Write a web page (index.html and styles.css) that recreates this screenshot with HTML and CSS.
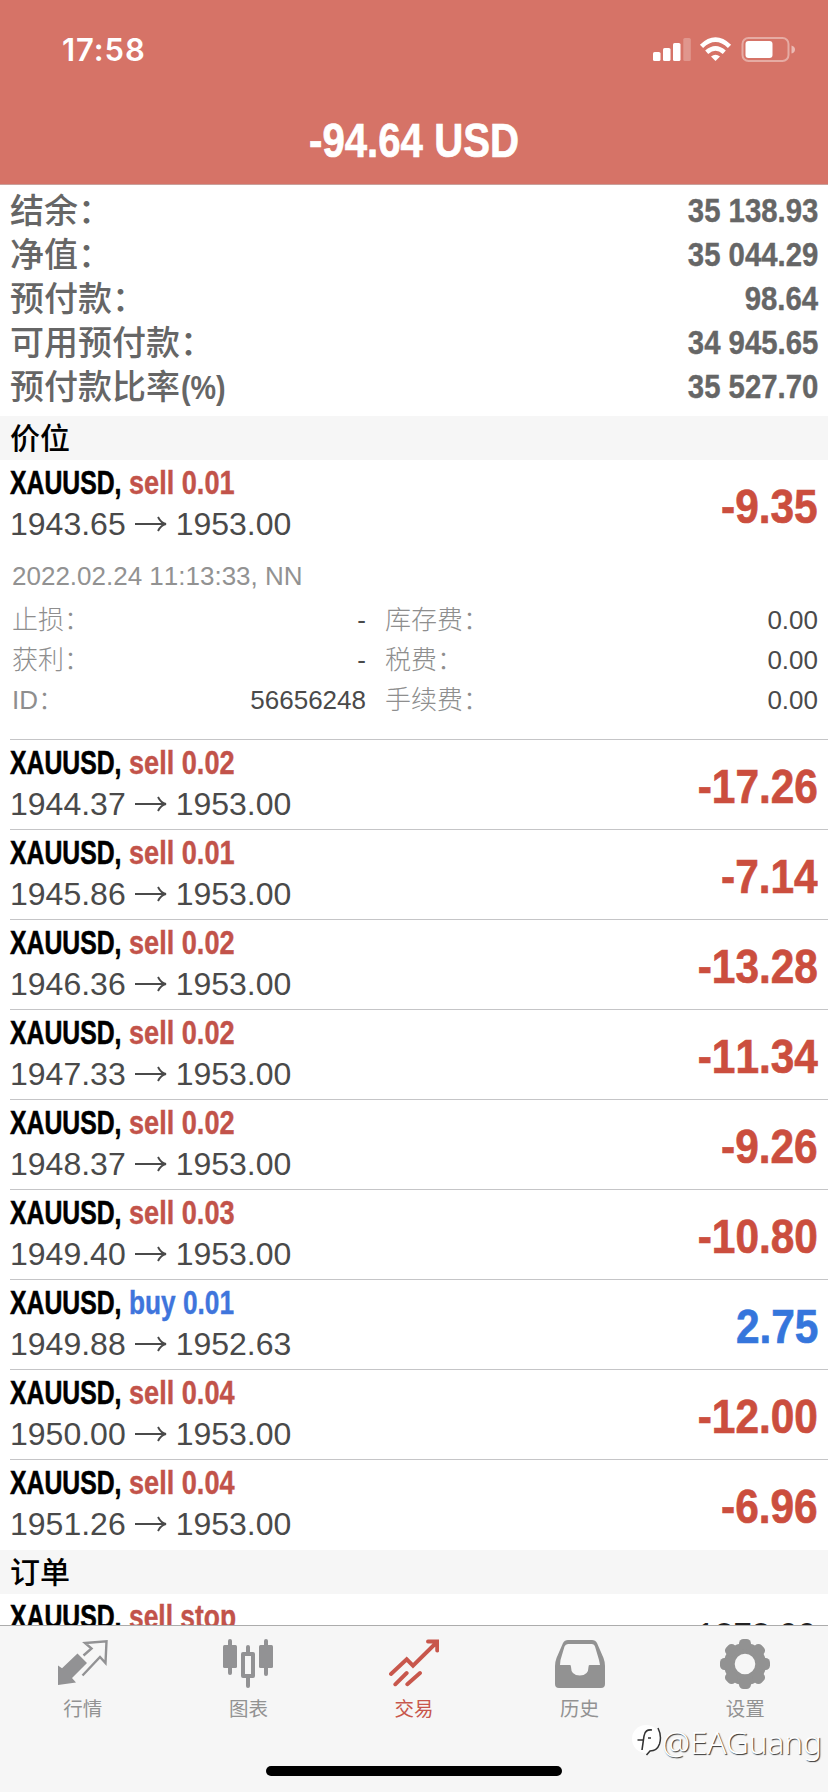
FILE: index.html
```html
<!DOCTYPE html>
<html lang="zh-CN">
<head>
<meta charset="utf-8">
<title>交易</title>
<link rel="stylesheet" href="styles.css">
</head>
<body>
<div class="screen">
  <header class="header">
    <div class="status">
      <span class="clock">17:58</span>
      <svg class="status-icons" width="142" height="26" viewBox="0 0 142 26">
        <g fill="#fff">
          <rect x="0" y="15" width="7.5" height="9" rx="1.6"/>
          <rect x="10" y="11" width="7.5" height="13" rx="1.6"/>
          <rect x="20" y="6" width="7.5" height="18" rx="1.6"/>
          <rect x="30.300" y="1" width="7.5" height="23" rx="1.6" opacity=".25"/>
          <path d="M62.500 24 L58 19.500 Q62.500 15.800 67 19.500 Z"/>
          <rect x="92.500" y="4" width="27" height="17" rx="3"/>
          <path d="M138.500 8.500 Q142 9.500 142 12.500 T138.500 16.500 Z" opacity=".5"/>
        </g>
        <g fill="none" stroke="#fff" stroke-width="4.600">
          <path d="M48.500 9.300 Q62.500 -4 76.500 9.300"/>
          <path d="M53.700 15.300 Q62.500 7.500 71.300 15.300"/>
          <rect x="89.500" y="1" width="46" height="23" rx="6" stroke-width="2" opacity=".4"/>
        </g>
      </svg>
    </div>
    <h1 class="total"><span>-94.64 USD</span></h1>
  </header>

  <section class="summary">
    <div class="sum-row"><span>结余：</span><b class="num">35 138.93</b></div>
    <div class="sum-row"><span>净值：</span><b class="num">35 044.29</b></div>
    <div class="sum-row"><span>预付款：</span><b class="num">98.64</b></div>
    <div class="sum-row"><span>可用预付款：</span><b class="num">34 945.65</b></div>
    <div class="sum-row"><span>预付款比率<b class="pct">(%)</b></span><b class="num">35 527.70</b></div>
  </section>

  <h2 class="section">价位</h2>
  <article class="deal open">
    <div class="deal-head">
      <div><div class="name"><b class="symbol">XAUUSD,</b><b class="side sell">sell 0.01</b></div>
      <div class="prices"><span>1943.65</span><svg class="arrow" viewBox="0 0 32 20"><path d="M0 10H30.500M23 3Q26 9 31 10Q26 11 23 17"/></svg><span>1953.00</span></div></div>
      <b class="profit loss">-9.35</b>
    </div>
    <div class="stamp">2022.02.24 11:13:33, NN</div>
    <dl class="details">
      <dt>止损：</dt><dd>-</dd><dt>库存费：</dt><dd>0.00</dd>
      <dt>获利：</dt><dd>-</dd><dt>税费：</dt><dd>0.00</dd>
      <dt>ID：</dt><dd>56656248</dd><dt>手续费：</dt><dd>0.00</dd>
    </dl>
  </article>
  <div id="deals"></div>
  <h2 class="section">订单</h2>
  <article class="order">
    <div class="name"><b class="symbol">XAUUSD,</b><b class="side sell stop">sell stop</b></div>
    <span class="order-price">1878.00</span>
  </article>

  <nav class="tabs">
    <div class="tab">
      <svg width="50" height="50" viewBox="0 0 50 50"><path fill="#929294" d="M0 26.500 4 29.300 19.500 14.500 29 24 14 39 18 43.500 0 46Z"/><path fill="none" stroke="#929294" stroke-width="2.400" d="M25.500 16.500 33.500 9.500 27 4 48.500 2.200 47.500 24 42 18 24.500 36.500"/></svg>
      <span>行情</span>
    </div>
    <div class="tab">
      <svg width="50" height="50" viewBox="0 0 50 50"><g fill="#929294"><rect x="5" width="4" height="36" rx="2"/><rect y="6" width="14" height="23" rx="1.500"/><rect x="41" width="4" height="37" rx="2"/><rect x="36" y="6" width="14" height="23" rx="1.500"/><rect x="23" y="6" width="4" height="10" rx="2"/><rect x="23" y="36" width="4" height="13" rx="2"/></g><rect x="20" y="15" width="10" height="22" fill="none" stroke="#929294" stroke-width="4" stroke-linejoin="round"/></svg>
      <span>图表</span>
    </div>
    <div class="tab active">
      <svg width="50" height="50" viewBox="0 0 50 50"><path fill="none" stroke="#c8574c" stroke-width="3.900" stroke-linecap="round" d="M2 35 17.700 20.300 24 26.700 48 3M39 2.500H48.200V11.500M6.300 45.300 17.700 34M18.300 45.300 31 34"/></svg>
      <span>交易</span>
    </div>
    <div class="tab">
      <svg width="50" height="50" viewBox="0 0 50 50"><path fill="#929292" fill-rule="evenodd" d="M8 4Q9.500 1 13 1H37Q40.500 1 42 4L48.500 19Q50 23 50 27V45Q50 49 46 49H4Q0 49 0 45V27Q0 23 1.500 19ZM13 5Q10.500 5 9.500 7.500L5.500 21 5 26H15Q16 26 16 28 16 36.500 24.800 36.500 33.500 36.500 33.500 28 33.500 26 34.500 26H45L44 21 40 7.500Q39.500 5 37 5Z"/></svg>
      <span>历史</span>
    </div>
    <div class="tab">
      <svg width="50" height="50" viewBox="-25 -25 50 50"><g fill="none" stroke="#929292"><circle r="15.700" stroke-width="10.800"/></g><g fill="#929292"><rect id="tooth" x="-6" y="-25" width="12" height="11" rx="4.500"/><use href="#tooth" transform="rotate(45)"/><use href="#tooth" transform="rotate(90)"/><use href="#tooth" transform="rotate(135)"/><use href="#tooth" transform="rotate(180)"/><use href="#tooth" transform="rotate(225)"/><use href="#tooth" transform="rotate(270)"/><use href="#tooth" transform="rotate(315)"/></g></svg>
      <span>设置</span>
    </div>
  </nav>
  <div class="home-bar"></div>
  <div class="watermark">
    <svg width="30" height="36" viewBox="0 0 30 36"><circle cx="14" cy="15" r="14" fill="#fff"/><path d="M26 4Q30 12 27.500 20 25 27 18 27L14.500 31" fill="none" stroke="#333" stroke-width="1.500"/><path d="M20 6Q13 5 12 12L10 26M5.500 16H11M16 14H19" fill="none" stroke="#333" stroke-width="1.600"/></svg>
    <span>@EAGuang</span>
  </div>
</div>
<script src="deals.js"></script>
</body>
</html>
```
FILE: styles.css
```css
* { box-sizing: border-box; }
body { margin: 0; background: #fff; font-family: "Liberation Sans", "Noto Sans CJK SC", sans-serif; font-kerning: none; }
.screen { position: relative; width: 828px; height: 1792px; overflow: hidden; background: #fff; }

.header { height: 185px; background: #d67367; border-bottom: 1px solid #c9a09b; color: #fff; }
.status { display: flex; justify-content: space-between; height: 98px; padding: 36px 33px 0 62px; }
.clock { font: 600 31px/28px Inter, sans-serif; letter-spacing: .9px; }
.status-icons { margin-top: 1px; }
.total { margin: 0; font-size: 49px; line-height: 85px; text-align: center; }
.total span { display: inline-block; transform: scaleX(.82); -webkit-text-stroke: .7px; }

.summary { height: 231px; padding: 4px 10px 0; color: #666; font-size: 34px; font-weight: 500; }
.sum-row { display: flex; justify-content: space-between; height: 44px; line-height: 44px; }
.num { transform: scaleX(.862); transform-origin: right; line-height: 42px; -webkit-text-stroke: .4px; }
.pct { display: inline-block; margin-left: 1px; transform: scaleX(.87); transform-origin: left; font-size: 33px; line-height: 40px; }

.section { margin: 0; height: 44px; padding-left: 10px; background: #f6f6f6; color: #000; font-size: 30px; font-weight: 500; line-height: 46px; }

.deal { height: 90px; margin-left: 10px; padding-right: 10px; border-bottom: 1px solid #c5c5c7; }
.deal.open { height: 280px; }
.deal.last { border-bottom: 0; }
.deal-head { display: flex; justify-content: space-between; height: 82px; }
.name { display: flex; height: 46px; line-height: 46px; font-size: 33px; white-space: nowrap; }
.symbol { width: 118.500px; color: #000; transform: scaleX(.75); transform-origin: left; -webkit-text-stroke: .6px; }
.side { transform: scaleX(.822); transform-origin: left; -webkit-text-stroke: .4px; }
.sell { color: #c2534a; }
.stop { transform: scaleX(.8); }
.buy { color: #3f75dc; transform: scaleX(.795); }
.prices { display: flex; align-items: center; height: 36px; line-height: 36px; color: #4a4a4a; font-size: 32px; }
.arrow { width: 32px; height: 20px; margin: 0 9px 0 9px; fill: none; stroke: #4a4a4a; stroke-width: 1.900; }
.profit { font-size: 49px; line-height: 93px; transform: scaleX(.865); transform-origin: right; -webkit-text-stroke: .7px; }
.loss { color: #cb4e3e; }
.gain { color: #3576dc; }
.stamp { margin: 14px 0 4px 2px; color: #929292; font-size: 26px; line-height: 40px; }
.details { display: grid; grid-template-columns: 100px 255px 120px 1fr; margin: 0 0 0 1px; font-size: 26px; line-height: 40px; }
.details dt { height: 40px; padding-left: 1px; color: #8e8e8e; font-weight: 300; white-space: nowrap; }
.details dd { height: 40px; margin: 0; color: #4a4a4a; text-align: right; }
.details dt:nth-of-type(even) { padding-left: 19px; }

.order { display: flex; justify-content: space-between; padding: 0 12px 0 10px; }
.order-price { padding-top: 21px; color: #222; font-size: 33px; line-height: 40px; }

.tabs { position: absolute; left: 0; right: 0; bottom: 0; display: flex; justify-content: space-between; height: 167px; padding: 13px 0 0; background: #f6f6f6; border-top: 1px solid #acacac; }
.tab { display: flex; flex: 1; flex-direction: column; align-items: center; color: #929292; font-size: 19.500px; line-height: 28px; }
.tab span { margin-top: 6px; }
.active { color: #c8574c; }
.home-bar { position: absolute; left: 266px; bottom: 16px; width: 296px; height: 10px; border-radius: 5px; background: #000; }
.watermark { position: absolute; right: 6px; bottom: 28px; display: flex; align-items: center; color: #fff; font: 300 31.500px/44px "Noto Sans", sans-serif; text-shadow: 1px 1px 1px #333; }
```
FILE: deals.js
```js
const deals = [
  ["sell 0.02", "1944.37", "1953.00", "-17.26"],
  ["sell 0.01", "1945.86", "1953.00", "-7.14"],
  ["sell 0.02", "1946.36", "1953.00", "-13.28"],
  ["sell 0.02", "1947.33", "1953.00", "-11.34"],
  ["sell 0.02", "1948.37", "1953.00", "-9.26"],
  ["sell 0.03", "1949.40", "1953.00", "-10.80"],
  ["buy 0.01", "1949.88", "1952.63", "2.75"],
  ["sell 0.04", "1950.00", "1953.00", "-12.00"],
  ["sell 0.04", "1951.26", "1953.00", "-6.96"]
];
const arrow = document.querySelector(".arrow").outerHTML;
document.getElementById("deals").innerHTML = deals.map(([side, from, to, profit], i) => `
  <article class="deal${i === deals.length - 1 ? " last" : ""}">
    <div class="deal-head">
      <div><div class="name"><b class="symbol">XAUUSD,</b><b class="side ${side.split(" ")[0]}">${side}</b></div>
      <div class="prices"><span>${from}</span>${arrow}<span>${to}</span></div></div>
      <b class="profit ${profit[0] === "-" ? "loss" : "gain"}">${profit}</b>
    </div>
  </article>`).join("");
```
